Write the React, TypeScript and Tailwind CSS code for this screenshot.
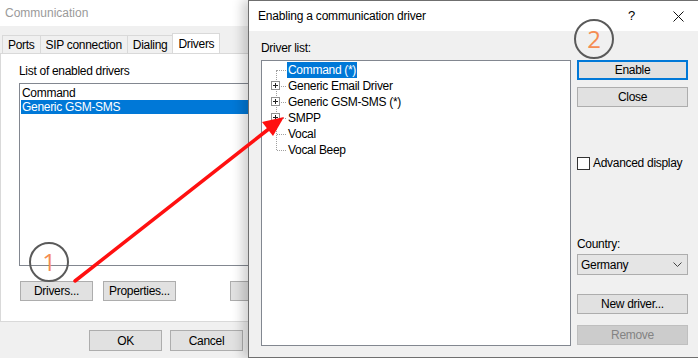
import React from 'react';

const font = { fontFamily: '"Liberation Sans", Arial, sans-serif' };

function WinButton({
  children,
  className = '',
  focused = false,
  disabled = false,
}: {
  children: React.ReactNode;
  className?: string;
  focused?: boolean;
  disabled?: boolean;
}) {
  const border = focused
    ? 'border-2 border-[#0078d7]'
    : disabled
      ? 'border border-[#bfbfbf]'
      : 'border border-[#adadad]';
  return (
    <div
      className={`flex h-[20px] items-center justify-center ${border} ${
        disabled ? 'bg-[#cccccc] text-[#838383]' : 'bg-[#e1e1e1] text-black'
      } text-[12px] tracking-[-0.3px] ${className}`}
    >
      {children}
    </div>
  );
}

function Tab({ label, active = false }: { label: string; active?: boolean }) {
  return active ? (
    <div className="-mb-px flex h-[21px] items-center border border-b-0 border-[#d9d9d9] bg-white px-[5px] text-[12px] tracking-[-0.3px]">
      {label}
    </div>
  ) : (
    <div className="-mr-px flex h-[18px] items-center border border-b-0 border-[#d9d9d9] bg-[#f0f0f0] px-[5px] text-[12px] tracking-[-0.3px]">
      {label}
    </div>
  );
}

function PlusBox() {
  return (
    <div className="absolute left-[-5px] top-[3px] flex h-[9px] w-[9px] items-center justify-center border border-[#919191] bg-white">
      <svg width="7" height="7" viewBox="0 0 7 7">
        <path d="M1 3.5h5M3.5 1v5" stroke="#222" strokeWidth="1" />
      </svg>
    </div>
  );
}

const treeItems = [
  { label: 'Command (*)', plus: false, selected: true },
  { label: 'Generic Email Driver', plus: true },
  { label: 'Generic GSM-SMS (*)', plus: true },
  { label: 'SMPP', plus: true },
  { label: 'Vocal', plus: false },
  { label: 'Vocal Beep', plus: false },
];

function Tree() {
  return (
    <div className="relative ml-[14px] pt-[1px]">
      {/* vertical dotted trunk */}
      <div className="absolute left-0 top-[9px] h-[80px] border-l border-dotted border-[#a0a0a0]" />
      {treeItems.map((item, i) => (
        <div key={i} className="relative flex h-[16px] items-center">
          <div className="ml-px w-[9px] border-t border-dotted border-[#a0a0a0]" />
          {item.plus && <PlusBox />}
          <span
            className={`ml-px px-[1px] leading-[16px] text-[12px] tracking-[-0.3px] ${
              item.selected ? 'bg-[#0078d7] text-white' : 'text-black'
            }`}
          >
            {item.label}
          </span>
        </div>
      ))}
    </div>
  );
}

function Marker({ n }: { n: string }) {
  return (
    <div className="flex h-[40px] w-[40px] items-center justify-center rounded-full border-2 border-[#5a5a5a]">
      <span
        className="text-[24px] font-medium leading-none text-[#f58c52]"
        style={{ fontFamily: '"Open Sans", Arial, sans-serif' }}
      >
        {n}
      </span>
    </div>
  );
}

export default function App() {
  return (
    <div className="relative h-[358px] w-[698px] overflow-hidden bg-[#f0f0f0]" style={font}>
      {/* Background window: Communication */}
      <div className="flex h-full flex-col">
        <div className="flex h-[26px] items-center bg-white pl-[5px] text-[12px] text-[#9a9a9a]">
          Communication
        </div>
        <div className="flex flex-1 flex-col bg-[#f0f0f0] pt-[7px]">
          <div className="flex items-end pl-[2px]">
            <Tab label="Ports" />
            <Tab label="SIP connection" />
            <Tab label="Dialing" />
            <Tab label="Drivers" active />
          </div>
          <div className="flex h-[269px] flex-col border border-[#d9d9d9] bg-white pl-[18px] pt-[9px]">
            <div className="text-[12px] leading-[16px] tracking-[-0.3px]">List of enabled drivers</div>
            <div className="mt-[4px] h-[183px] border border-r-0 border-[#828790] pt-[2px] pl-[1px] text-[12px] leading-[14px] tracking-[-0.3px]">
              <div className="px-[1px]">Command</div>
              <div className="bg-[#0078d7] px-[1px] text-white">Generic GSM-SMS</div>
            </div>
            <div className="mt-[15px] flex gap-[10px] pl-px">
              <WinButton className="w-[73px]">Drivers...</WinButton>
              <WinButton className="w-[73px]">Properties...</WinButton>
              <WinButton className="ml-[44px] w-[73px]">Delete</WinButton>
            </div>
          </div>
          <div className="flex gap-[8px] pl-[89px] pt-[8px]">
            <WinButton className="h-[21px] w-[73px]">OK</WinButton>
            <WinButton className="h-[21px] w-[73px]">Cancel</WinButton>
          </div>
        </div>
      </div>

      {/* Foreground dialog: Enabling a communication driver */}
      <div className="absolute left-[248px] top-0 flex h-[358px] w-[451px] flex-col border border-[#6f6f6f] bg-[#f0f0f0] shadow-[-6px_0_10px_rgba(0,0,0,0.18)]">
        <div className="flex h-[30px] items-center bg-white pl-[9px] text-[12px] tracking-[-0.2px]">
          <span className="flex-1">Enabling a communication driver</span>
          <span className="mr-[38px] text-[13px]">?</span>
          <svg className="mr-[14px]" width="11" height="11" viewBox="0 0 11 11">
            <path d="M0.5 0.5l10 10M10.5 0.5l-10 10" stroke="#111" strokeWidth="1" />
          </svg>
        </div>
        <div className="flex flex-1 pl-[12px]">
          <div className="flex flex-col pt-[9px]">
            <div className="text-[12px] leading-[16px] tracking-[-0.3px]">Driver list:</div>
            <div className="mt-[4px] h-[286px] w-[310px] border border-[#828790] bg-white">
              <Tree />
            </div>
          </div>
          <div className="ml-[6px] flex w-[111px] flex-col pt-[29px]">
            <WinButton focused>Enable</WinButton>
            <WinButton className="mt-[7px]">Close</WinButton>
            <label className="mt-[47px] flex items-center gap-[3px] text-[12px] tracking-[-0.3px]">
              <span className="h-[13px] w-[13px] border border-[#333] bg-white" />
              Advanced display
            </label>
            <div className="mt-[64px] text-[12px] leading-[16px] tracking-[-0.3px]">Country:</div>
            <div className="mt-[2px] flex h-[21px] items-center border border-[#adadad] bg-[#e5e5e5] pl-[3px] pr-[5px] text-[12px] tracking-[-0.3px]">
              <span className="flex-1">Germany</span>
              <svg width="9" height="5" viewBox="0 0 9 5">
                <path d="M0.5 0.5l4 4 4-4" stroke="#444" fill="none" strokeWidth="1" />
              </svg>
            </div>
            <WinButton className="mt-[19px]">New driver...</WinButton>
            <WinButton className="mt-[11px]" disabled>
              Remove
            </WinButton>
          </div>
        </div>
      </div>

      {/* Annotation overlays */}
      <div className="absolute left-[29px] top-[242px]">
        <Marker n="1" />
      </div>
      <div className="absolute left-[574px] top-[19px]">
        <Marker n="2" />
      </div>
      <svg className="pointer-events-none absolute left-0 top-0" width="698" height="358">
        <line x1="75" y1="281" x2="270" y2="128" stroke="#ff1010" strokeWidth="3.5" strokeLinecap="round" />
        <polygon points="284,117 262,122 273,136" fill="#ff1010" />
      </svg>
    </div>
  );
}
